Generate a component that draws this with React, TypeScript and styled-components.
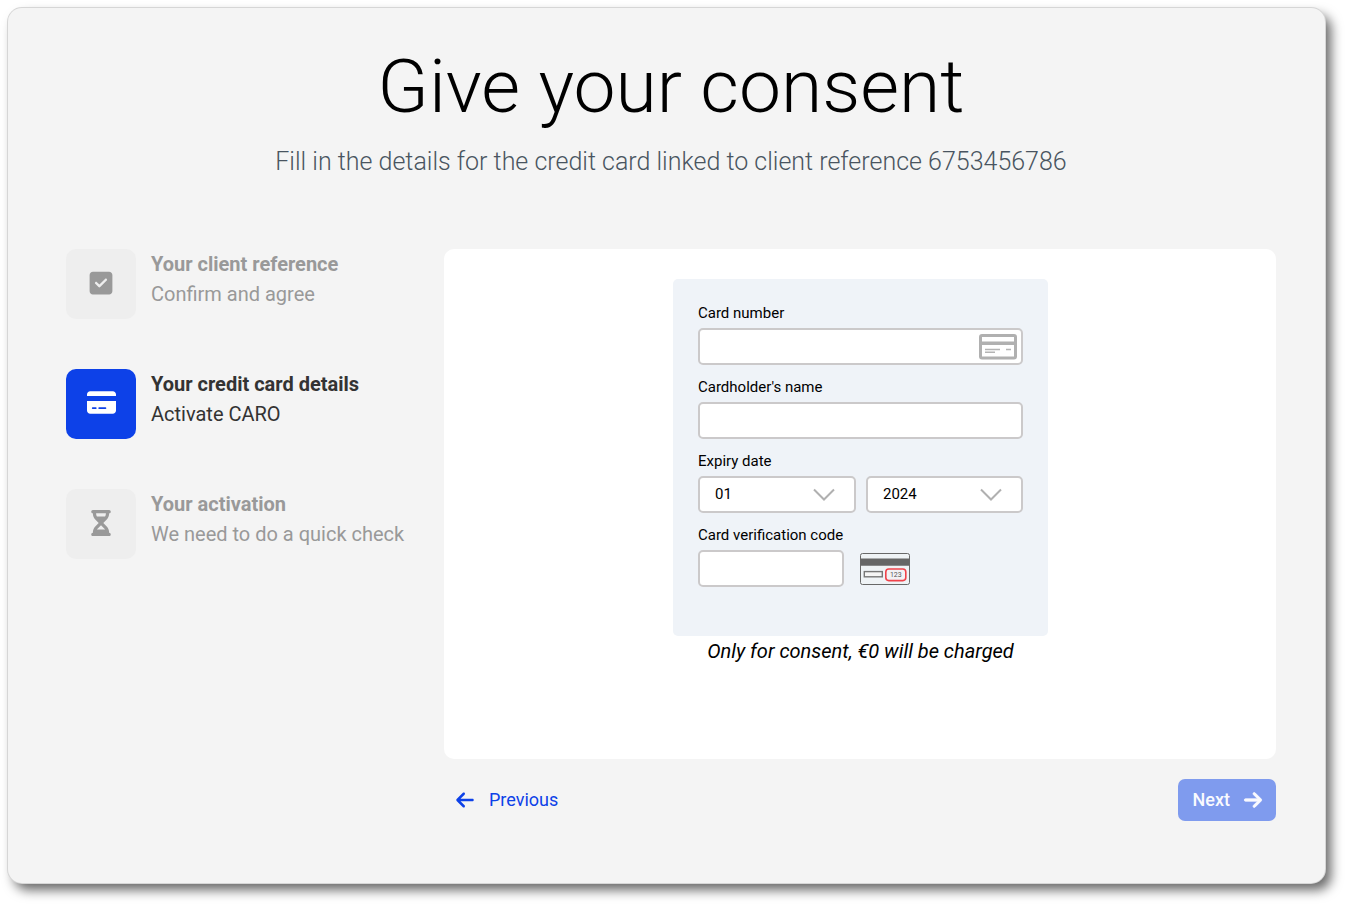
import React from 'react';
import styled, { createGlobalStyle, css } from 'styled-components';
import { FaArrowLeft, FaArrowRight, FaCreditCard, FaHourglassHalf, FaSquareCheck } from 'react-icons/fa6';

const GlobalStyle = createGlobalStyle`
  *, *::before, *::after { box-sizing: border-box; }
  body {
    margin: 0;
    background: #fff;
    color: #000;
    font-family: Roboto, "Liberation Sans", sans-serif;
  }
  h1, h2, p, ol, fieldset { margin: 0; padding: 0; border: 0; min-width: 0; }
  button, input, select { font: inherit; }
`;

const Page = styled.div`
  min-height: 100vh;
  display: flex;
  padding: 8px 24px 24px 8px;
`;

const Window = styled.main`
  flex: 1;
  display: flex;
  flex-direction: column;
  padding: 32px 49px 62px 58px;
  background: #f4f4f4;
  border-radius: 14px;
  box-shadow: 0 0 0 1px #d6d6d6, 6px 7px 12px 0 rgba(0, 0, 0, 0.6);
`;

const Header = styled.header`
  text-align: center;
`;

const Title = styled.h1`
  font-size: 75px;
  line-height: 92px;
  font-weight: 300;
`;

const Subtitle = styled.p`
  margin-top: 12px;
  font-size: 25px;
  line-height: 36px;
  font-weight: 300;
  color: #495460;
`;

const Content = styled.div`
  display: grid;
  grid-template-columns: 378px 1fr;
  margin-top: 69px;
`;

const Steps = styled.ol`
  display: flex;
  flex-direction: column;
  gap: 50px;
  list-style: none;
`;

const StepItem = styled.li<{ $active?: boolean }>`
  display: flex;
  gap: 15px;
  color: ${(p) => (p.$active ? '#333' : '#999')};
`;

const StepIcon = styled.span<{ $active?: boolean }>`
  display: flex;
  align-items: center;
  justify-content: center;
  width: 70px;
  height: 70px;
  padding-bottom: 3px;
  border-radius: 10px;
  color: ${(p) => (p.$active ? '#fff' : '#999')};
  background: ${(p) => (p.$active ? '#0d41e8' : '#eee')};
`;

const StepTitle = styled.h2`
  font-size: 20px;
  line-height: 30px;
  font-weight: 700;
`;

const StepText = styled.p`
  font-size: 20px;
  line-height: 30px;
`;

const Panel = styled.section`
  display: flex;
  flex-direction: column;
  align-items: center;
  min-height: 510px;
  padding: 30px 30px 30px 31px;
  background: #fff;
  border-radius: 10px;
`;

const CardForm = styled.form`
  display: flex;
  flex-direction: column;
  gap: 12px;
  width: 375px;
  padding: 24px 25px 49px;
  background: #eff3f8;
  border-radius: 5px;
`;

const Field = styled.div`
  display: flex;
  flex-direction: column;
  gap: 5px;
`;

const labelText = css`
  display: block;
  font-size: 15px;
  line-height: 20px;
`;

const Label = styled.label`
  ${labelText}
`;

const GroupLabel = styled.legend`
  ${labelText}
  padding: 0;
  margin-bottom: 5px;
`;

const controlBox = css`
  width: 100%;
  height: 37px;
  border: 2px solid #cbc9ca;
  border-radius: 5px;
  background: #fff;
  color: #000;
  font-size: 15px;
`;

const Control = styled.div`
  position: relative;
  display: flex;
  align-items: center;
`;

const TextInput = styled.input`
  ${controlBox}
  padding: 0 10px;
`;

const Select = styled.select`
  ${controlBox}
  appearance: none;
  padding: 0 40px 2px 15px;
`;

const Adornment = styled.span<{ $right: number }>`
  position: absolute;
  right: ${(p) => p.$right}px;
  display: flex;
  pointer-events: none;
`;

const DateRow = styled.div`
  display: grid;
  grid-template-columns: 158px 1fr;
  gap: 10px;
`;

const CodeRow = styled.div`
  display: grid;
  grid-template-columns: 146px auto;
  justify-content: start;
  align-items: center;
  gap: 16px;
`;

const Note = styled.p`
  font-size: 20px;
  line-height: 30px;
  font-style: italic;
`;

const Actions = styled.div`
  grid-column: 2;
  display: flex;
  justify-content: space-between;
  margin-top: 20px;
`;

const ActionButton = styled.button<{ $primary?: boolean }>`
  display: flex;
  align-items: center;
  gap: ${(p) => (p.$primary ? 13 : 14)}px;
  height: 42px;
  padding: ${(p) => (p.$primary ? '0 13px 0 15px' : '0 11px')};
  border: 0;
  border-radius: 7px;
  font-size: 18px;
  line-height: 24px;
  font-weight: ${(p) => (p.$primary ? 500 : 400)};
  color: ${(p) => (p.$primary ? '#f9fafe' : '#0d41e8')};
  background: ${(p) => (p.$primary ? '#7f9bee' : 'transparent')};
  svg {
    font-size: 20px;
    stroke-width: ${(p) => (p.$primary ? 18 : 0)};
  }
`;

const CardOutline = () => (
  <svg width="38" height="26" viewBox="0 0 38 26" aria-hidden="true">
    <rect x="1.5" y="1.5" width="35" height="22.5" rx="1.5" fill="#fff" stroke="#b0b0b0" strokeWidth="3" />
    <path d="M1 9.2H37" stroke="#b0b0b0" strokeWidth="3.6" />
    <path d="M6 15.5H21M6 18.3H16M27 15.5H32" stroke="#b4b4b4" strokeWidth="1.5" />
  </svg>
);

const Chevron = () => (
  <svg width="22" height="14" viewBox="0 0 22 14" aria-hidden="true">
    <path d="M1 1.5L11 11.5L21 1.5" fill="none" stroke="#b0b0b0" strokeWidth="2" />
  </svg>
);

const CodeCard = () => (
  <svg width="50" height="32" viewBox="0 0 50 32" role="img" aria-label="Code on the back of the card">
    <rect x="0.5" y="0.5" width="49" height="31" rx="2" fill="#eff3f6" stroke="#686868" />
    <path d="M1 9.2H49" stroke="#666" strokeWidth="7.2" />
    <rect x="4.3" y="18.6" width="18" height="5.2" fill="#f5f5f5" stroke="#777" strokeWidth="1.4" />
    <rect x="25.8" y="16" width="20" height="11.6" rx="3" fill="#f2f2f4" stroke="#f0434b" strokeWidth="1.6" />
    <text x="35.8" y="24.4" textAnchor="middle" fontSize="7" fontFamily="Roboto, sans-serif" fill="#555">123</text>
  </svg>
);

const steps = [
  { title: 'Your client reference', text: 'Confirm and agree', Icon: FaSquareCheck, size: 26 },
  { title: 'Your credit card details', text: 'Activate CARO', Icon: FaCreditCard, size: 29, active: true },
  { title: 'Your activation', text: 'We need to do a quick check', Icon: FaHourglassHalf, size: 26 },
];

const months = ['01', '02', '03', '04', '05', '06', '07', '08', '09', '10', '11', '12'];
const years = ['2024', '2025', '2026', '2027', '2028', '2029', '2030'];

function ExpirySelect({ name, options }: { name: string; options: string[] }) {
  return (
    <Control>
      <Select aria-label={name} defaultValue={options[0]}>
        {options.map((o) => (
          <option key={o}>{o}</option>
        ))}
      </Select>
      <Adornment $right={21}><Chevron /></Adornment>
    </Control>
  );
}

export default function App() {
  return (
    <>
      <GlobalStyle />
      <Page>
        <Window>
          <Header>
            <Title>Give your consent</Title>
            <Subtitle>Fill in the details for the credit card linked to client reference 6753456786</Subtitle>
          </Header>
          <Content>
            <Steps>
              {steps.map(({ title, text, Icon, size, active }) => (
                <StepItem key={title} $active={active} aria-current={active ? 'step' : undefined}>
                  <StepIcon $active={active}><Icon size={size} /></StepIcon>
                  <div>
                    <StepTitle>{title}</StepTitle>
                    <StepText>{text}</StepText>
                  </div>
                </StepItem>
              ))}
            </Steps>
            <Panel>
              <CardForm>
                <Field>
                  <Label htmlFor="card-number">Card number</Label>
                  <Control>
                    <TextInput id="card-number" inputMode="numeric" />
                    <Adornment $right={6}><CardOutline /></Adornment>
                  </Control>
                </Field>
                <Field>
                  <Label htmlFor="card-name">Cardholder's name</Label>
                  <TextInput id="card-name" />
                </Field>
                <fieldset>
                  <GroupLabel>Expiry date</GroupLabel>
                  <DateRow>
                    <ExpirySelect name="Expiry month" options={months} />
                    <ExpirySelect name="Expiry year" options={years} />
                  </DateRow>
                </fieldset>
                <Field>
                  <Label htmlFor="card-code">Card verification code</Label>
                  <CodeRow>
                    <TextInput id="card-code" inputMode="numeric" />
                    <CodeCard />
                  </CodeRow>
                </Field>
              </CardForm>
              <Note>Only for consent, €0 will be charged</Note>
            </Panel>
            <Actions>
              <ActionButton type="button"><FaArrowLeft />Previous</ActionButton>
              <ActionButton type="button" $primary>Next<FaArrowRight /></ActionButton>
            </Actions>
          </Content>
        </Window>
      </Page>
    </>
  );
}
